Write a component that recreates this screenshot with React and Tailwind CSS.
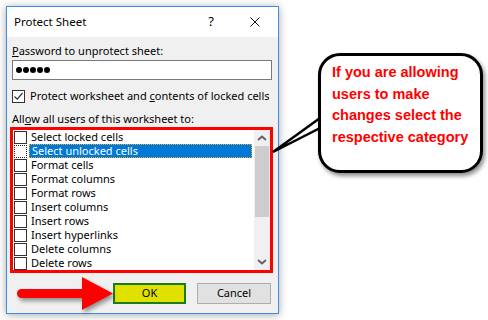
import React from 'react';

const items = [
  'Select locked cells',
  'Select unlocked cells',
  'Format cells',
  'Format columns',
  'Format rows',
  'Insert columns',
  'Insert rows',
  'Insert hyperlinks',
  'Delete columns',
  'Delete rows',
];

function Chevron({ down }) {
  return (
    <svg width="10" height="6" viewBox="0 0 10 6" className={down ? 'rotate-180' : ''}>
      <path d="M1 5 L5 1.5 L9 5" fill="none" stroke="#606060" strokeWidth="1.8" />
    </svg>
  );
}

function ListBox() {
  return (
    <div className="-ml-[2px] w-[263px] h-[146px] border-[3px] border-[#ff0000] bg-white flex">
      <div className="flex-1 flex flex-col">
        {items.map((item, i) => {
          const selected = i === 1;
          return (
            <div key={item} className="h-[14px] flex items-center leading-[14px]">
              <div
                className={
                  'ml-[1px] w-[13px] h-[13px] border bg-white ' +
                  (selected ? 'border-dotted border-[#222]' : 'border-[#333]')
                }
              />
              <div
                className={
                  'ml-[2px] mr-[2px] flex-1 h-[14px] flex items-center pl-[2px] ' +
                  (selected ? 'bg-[#0078d7] text-white border border-dotted border-[#f5a623]' : '')
                }
              >
                {item}
              </div>
            </div>
          );
        })}
      </div>
      <div className="w-[16px] bg-[#f0f0f0] flex flex-col">
        <div className="h-[16px] flex items-center justify-center">
          <Chevron />
        </div>
        <div className="mx-[1px] h-[71px] bg-[#cdcdcd]" />
        <div className="flex-1" />
        <div className="h-[16px] flex items-center justify-center">
          <Chevron down />
        </div>
      </div>
    </div>
  );
}

function Dialog() {
  return (
    <div className="w-[273px] h-[308px] border border-[#3c8fde] bg-[#f0f0f0] shadow-[0_1px_8px_rgba(0,0,0,0.35)] flex flex-col text-[11px] text-black">
      <div className="h-[30px] bg-white flex items-center pl-[7px] pr-[18px]">
        <span className="flex-1 text-[11.5px]">Protect Sheet</span>
        <span className="mr-[36px] text-[13px]">?</span>
        <svg width="10" height="10" viewBox="0 0 10 10">
          <path d="M0.5 0.5 L9.5 9.5 M9.5 0.5 L0.5 9.5" stroke="#111" strokeWidth="1" />
        </svg>
      </div>
      <div className="flex-1 flex flex-col px-[5px] pt-[6px]">
        <div className="h-4 leading-4">
          <span className="underline">P</span>assword to unprotect sheet:
        </div>
        <div className="mt-px h-5 w-[260px] bg-white border border-[#7a7a7a] flex items-center pl-[3px] gap-[1px]">
          {[0, 1, 2, 3, 4].map((d) => (
            <span key={d} className="w-[6px] h-[6px] rounded-full bg-black" />
          ))}
        </div>
        <div className="mt-[8px] h-4 flex items-center gap-[5px]">
          <div className="w-[13px] h-[13px] border border-[#333] bg-white flex items-center justify-center">
            <svg width="11" height="11" viewBox="0 0 11 11">
              <path d="M1.5 5.5 L4.2 8.2 L9.5 2" fill="none" stroke="#333" strokeWidth="1.2" />
            </svg>
          </div>
          <span className="leading-4 whitespace-nowrap">
            Protect worksheet and <span className="underline">c</span>ontents of locked cells
          </span>
        </div>
        <div className="mt-[7px] h-4 leading-4">
          All<span className="underline">o</span>w all users of this worksheet to:
        </div>
        <ListBox />
        <div className="mt-[10px] flex justify-end gap-[11px] pr-[2px]">
          <div className="w-[73px] h-[21px] bg-[#e1e100] border-2 border-[#1b7a1b] flex items-center justify-center">
            OK
          </div>
          <div className="w-[74px] h-[21px] bg-[#e1e1e1] border border-[#adadad] flex items-center justify-center">
            Cancel
          </div>
        </div>
      </div>
    </div>
  );
}

export default function App() {
  return (
    <div
      className="relative w-[488px] h-[320px] bg-white overflow-hidden pl-[6px] pt-[6px]"
      style={{ fontFamily: '"Noto Sans", "Open Sans", sans-serif' }}
    >
      <Dialog />

      <svg
        className="absolute left-0 top-[270px] drop-shadow-[2px_3px_2px_rgba(0,0,0,0.4)]"
        width="120"
        height="50"
        viewBox="0 0 120 50"
      >
        <rect x="17" y="19" width="70" height="9" rx="4.5" fill="#ff0000" />
        <polygon points="82,7 113,23.5 82,40" fill="#ff0000" />
      </svg>

      <svg className="absolute left-[270px] top-[110px]" width="55" height="50" viewBox="0 0 55 50">
        <polygon points="50,8 3,42 50,18" fill="white" stroke="black" strokeWidth="2.5" strokeLinejoin="miter" />
      </svg>

      <div
        className="absolute left-[318px] top-[53px] w-[165px] h-[120px] border-[3px] border-black rounded-[22px] bg-white shadow-[2px_3px_4px_rgba(0,0,0,0.45)] pl-[11px] pt-[6px] text-[#ff0000] font-bold text-[14.5px] leading-[21.5px] whitespace-nowrap"
        style={{ fontFamily: '"Liberation Sans", Arial, sans-serif' }}
      >
        If you are allowing
        <br />
        users to make
        <br />
        changes select the
        <br />
        respective category
      </div>
    </div>
  );
}
